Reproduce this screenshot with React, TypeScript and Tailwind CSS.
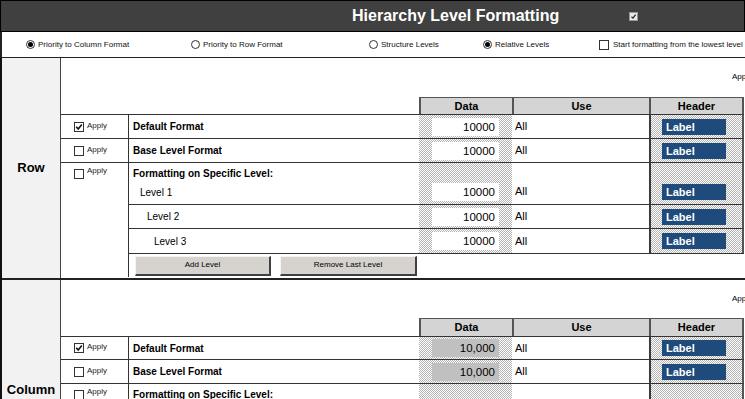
import React from 'react';

const dots = 'bg-[repeating-conic-gradient(#b4b4b4_0_25%,#ffffff_0_50%)] bg-[length:2px_2px]';

const Check = ({ on }: { on?: boolean }) => (
  <span className="w-[10px] h-[10px] border border-[#333] bg-white flex items-center justify-center shrink-0">
    {on && (
      <svg width="8" height="8" viewBox="0 0 8 8">
        <path d="M1.2 3.8 L3.2 6 L6.8 1.6" stroke="#111" strokeWidth="1.6" fill="none" />
      </svg>
    )}
  </span>
);

const Radio = ({ on }: { on?: boolean }) => (
  <span className="w-[9px] h-[9px] rounded-full border border-[#333] bg-white flex items-center justify-center shrink-0">
    {on && <span className="w-[5px] h-[5px] rounded-full bg-black" />}
  </span>
);

const ApplyCell = ({ on, tall }: { on?: boolean; tall?: boolean }) => (
  <div
    className={
      tall
        ? 'row-span-4 border-t border-r border-[#333] flex items-start pt-[6px] pl-[13px] gap-[3px]'
        : 'border-t border-r border-[#333] flex items-center pl-[13px] gap-[3px]'
    }
  >
    <Check on={on} />
    <span className="text-[8px] leading-[8px] text-[#222] -mt-[2px]">Apply</span>
  </div>
);

const DataCell = ({ gray, bottom }: { gray?: boolean; bottom?: boolean }) => (
  <div className={`${dots} border-t border-[#333] flex pl-[13px] ${bottom ? 'items-end pb-[3px]' : 'items-center'}`}>
    {gray ? (
      <div className="w-[67px] h-[18px] bg-[#c0c0c0] text-right pr-[4px] text-[11.5px] leading-[18px]">10,000</div>
    ) : (
      <div className="w-[67px] h-[18px] bg-white text-right pr-[4px] text-[11.5px] leading-[18px]">10000</div>
    )}
  </div>
);

const UseCell = ({ bottom }: { bottom?: boolean }) => (
  <div className={`border-t border-[#333] flex pl-[3px] text-[11px] ${bottom ? 'items-end pb-[5px]' : 'items-center'}`}>All</div>
);

const HeaderCell = ({ bottom }: { bottom?: boolean }) => (
  <div className={`${dots} border-t border-[#333] border-l-2 border-l-[#3a3a3a] flex pl-[11px] ${bottom ? 'items-end pb-[4px]' : 'items-center'}`}>
    <div className="w-[64px] h-[16px] bg-[#1f4a7c] text-white font-bold text-[11px] leading-[16px] pl-[4px]">Label</div>
  </div>
);

const Extra = () => <div className="border-t border-[#333] border-l-2 border-l-[#555]" />;

const Section = ({ title, column }: { title: string; column?: boolean }) => (
  <div className={column ? 'flex border-t-2 border-[#222] h-[221px]' : 'flex h-[220px]'}>
    <div className="w-[59px] shrink-0 border-r border-[#444] bg-[#f2f2f2] flex items-center justify-center text-[13px] font-bold">
      {title}
    </div>
    <div className="flex-1 flex flex-col overflow-hidden">
      <div className={column ? 'h-[38px] pl-[671px] pt-[13px] text-[8px] whitespace-nowrap' : 'h-[39px] pl-[671px] pt-[13px] text-[8px] whitespace-nowrap'}>
        Apply to all
      </div>
      <div
        className={
          column
            ? 'grid grid-cols-[68px_290px_93px_137px_93px_2px] grid-rows-[18px_23px_24px_42px_24px_25px_24px]'
            : 'grid grid-cols-[68px_290px_93px_137px_93px_2px] grid-rows-[17px_24px_24px_42px_24px_25px_24px]'
        }
      >
        <div className="col-span-2" />
        <div className="bg-[#d4d4d4] border-t border-[#555] border-l-2 border-l-[#555] text-[11px] font-bold flex items-center justify-center">Data</div>
        <div className="bg-[#d4d4d4] border-t border-[#555] border-l-2 border-l-[#555] text-[11px] font-bold flex items-center justify-center">Use</div>
        <div className="bg-[#d4d4d4] border-t border-[#555] border-l-2 border-l-[#555] text-[11px] font-bold flex items-center justify-center">Header</div>
        <div className="bg-[#d4d4d4] border-t border-[#555] border-l-2 border-l-[#555]" />

        <ApplyCell on />
        <div className="border-t border-[#333] flex items-center pl-[4px] text-[10px] font-bold">Default Format</div>
        <DataCell gray={column} />
        <UseCell />
        <HeaderCell />
        <Extra />

        <ApplyCell />
        <div className="border-t border-[#333] flex items-center pl-[4px] text-[10px] font-bold">Base Level Format</div>
        <DataCell gray={column} />
        <UseCell />
        <HeaderCell />
        <Extra />

        <ApplyCell tall />
        <div className="border-t border-[#333] flex flex-col pl-[4px] pt-[3px] text-[10px]">
          <span className="font-bold">Formatting on Specific Level:</span>
          <span className="pl-[7px] mt-[4px]">Level 1</span>
        </div>
        <DataCell gray={column} bottom />
        <UseCell bottom />
        <HeaderCell bottom />
        <Extra />

        <div className="border-t border-[#333] flex items-center pl-[18px] text-[10px]">Level 2</div>
        <DataCell gray={column} />
        <UseCell />
        <HeaderCell />
        <Extra />

        <div className="border-t border-[#333] flex items-center pl-[25px] text-[10px]">Level 3</div>
        <DataCell gray={column} />
        <UseCell />
        <HeaderCell />
        <Extra />

        <div className="col-span-5 border-t border-[#333] flex items-center pl-[6px] gap-[9px]">
          <button className="w-[136px] h-[20px] bg-[#d6d3ce] border border-[#f4f4f4] border-r-2 border-b-2 border-r-[#404040] border-b-[#404040] text-[8px]">
            Add Level
          </button>
          <button className="w-[137px] h-[20px] bg-[#d6d3ce] border border-[#f4f4f4] border-r-2 border-b-2 border-r-[#404040] border-b-[#404040] text-[8px]">
            Remove Last Level
          </button>
        </div>
      </div>
    </div>
  </div>
);

export default function App() {
  return (
    <div className="w-[745px] h-[399px] overflow-hidden bg-white text-black font-['Liberation_Sans',Arial,sans-serif]">
      <div className="h-[32px] bg-[#404040] border border-black flex items-center pl-[351px]">
        <span className="text-white font-bold text-[16px] whitespace-nowrap">Hierarchy Level Formatting</span>
        <span className="ml-[70px] w-[9px] h-[9px] bg-[#e8e8e8] border border-[#999] flex items-center justify-center">
          <svg width="7" height="7" viewBox="0 0 7 7">
            <path d="M1.5 3.8 L3 5.2 L5.6 1.6" stroke="#222" strokeWidth="1.2" fill="none" />
          </svg>
        </span>
      </div>
      <div className="h-[26px] border-b border-l-2 border-[#222] flex items-center pl-[24px] text-[8px] text-[#111] whitespace-nowrap">
        <div className="w-[165px] flex items-center gap-[3px]"><Radio on />Priority to Column Format</div>
        <div className="w-[178px] flex items-center gap-[3px]"><Radio />Priority to Row Format</div>
        <div className="w-[114px] flex items-center gap-[3px]"><Radio />Structure Levels</div>
        <div className="w-[116px] flex items-center gap-[3px]"><Radio on />Relative Levels</div>
        <div className="flex items-center gap-[4px]"><Check />Start formatting from the lowest level</div>
      </div>
      <div className="border-l-2 border-[#111]">
        <Section title="Row" />
        <Section title="Column" column />
      </div>
    </div>
  );
}
